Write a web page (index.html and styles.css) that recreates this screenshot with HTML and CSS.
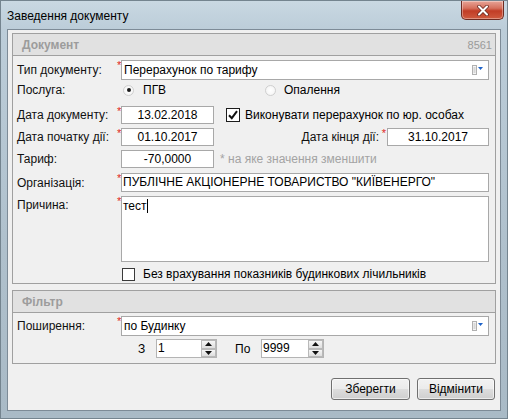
FILE: index.html
```html
<!DOCTYPE html>
<html lang="uk">
<head>
    <meta charset="UTF-8">
    <title>Заведення документу</title>
    <link rel="stylesheet" href="styles.css">
</head>
<body>
    <div class="window">
        <div class="titlebar">
            <span class="title">Заведення документу</span>
            <span class="close-btn">
                <svg width="14" height="11" viewBox="0 0 14 11">
                    <path d="M3 1.5 L11 9.5 M11 1.5 L3 9.5" stroke="#6b2a22" stroke-width="3.6" stroke-linecap="round"/>
                    <path d="M3 1.5 L11 9.5 M11 1.5 L3 9.5" stroke="#fff" stroke-width="2" stroke-linecap="round"/>
                </svg>
            </span>
        </div>

        <div class="client">
            <!-- Документ -->
            <div class="group">
                <div class="group-head">
                    <span>Документ</span>
                    <span class="doc-num">8561</span>
                </div>
                <div class="group-body">
                    <div class="row row-type">
                        <span class="label">Тип документу:</span><span class="req">*</span>
                        <div class="combo">
                            <span>Перерахунок по тарифу</span>
                            <svg class="combo-icon" width="12" height="10" viewBox="0 0 12 10">
                                <rect x="0.5" y="0.5" width="4" height="9" fill="#f4f4f4" stroke="#b0b0b0"/>
                                <path d="M1.5 3 H3.5 M1.5 5 H3.5 M1.5 7 H3.5" stroke="#b8b8b8"/>
                                <path d="M6 2 H11 L8.5 5 Z" fill="#1f63c8"/>
                            </svg>
                        </div>
                    </div>

                    <div class="row row-service">
                        <span class="label">Послуга:</span><span class="req"></span>
                        <span class="option option-first">
                            <span class="radio checked"></span><span class="option-text">ПГВ</span>
                        </span>
                        <span class="option">
                            <span class="radio"></span><span class="option-text">Опалення</span>
                        </span>
                    </div>

                    <div class="row row-date">
                        <span class="label">Дата документу:</span><span class="req">*</span>
                        <span class="input date">13.02.2018</span>
                        <span class="checkbox checked">
                            <svg width="12" height="12" viewBox="0 0 12 12">
                                <path d="M2 6.2 L4.8 9.2 L10 2.2" fill="none" stroke="#111" stroke-width="2"/>
                            </svg>
                        </span>
                        <span class="check-text">Виконувати перерахунок по юр. особах</span>
                    </div>

                    <div class="row row-period">
                        <span class="label">Дата початку дії:</span><span class="req">*</span>
                        <span class="input date">01.10.2017</span>
                        <span class="label-right">Дата кінця дії:</span><span class="req req-right">*</span>
                        <span class="input date-end">31.10.2017</span>
                    </div>

                    <div class="row row-tariff">
                        <span class="label">Тариф:</span><span class="req"></span>
                        <span class="input date">-70,0000</span>
                        <span class="hint">* на яке значення зменшити</span>
                    </div>

                    <div class="row row-org">
                        <span class="label">Організація:</span><span class="req">*</span>
                        <span class="input wide">ПУБЛІЧНЕ АКЦІОНЕРНЕ ТОВАРИСТВО "КИЇВЕНЕРГО"</span>
                    </div>

                    <div class="row row-reason">
                        <span class="label">Причина:</span><span class="req">*</span>
                        <div class="memo">тест<span class="caret"></span></div>
                    </div>

                    <div class="row row-meters">
                        <span class="checkbox plain"></span>
                        <span class="check-text">Без врахування показників будинкових лічильників</span>
                    </div>
                </div>
            </div>

            <!-- Фільтр -->
            <div class="group group-filter">
                <div class="group-head">
                    <span>Фільтр</span>
                </div>
                <div class="group-body">
                    <div class="row row-scope">
                        <span class="label">Поширення:</span><span class="req">*</span>
                        <div class="combo">
                            <span>по Будинку</span>
                            <svg class="combo-icon" width="12" height="10" viewBox="0 0 12 10">
                                <rect x="0.5" y="0.5" width="4" height="9" fill="#f4f4f4" stroke="#b0b0b0"/>
                                <path d="M1.5 3 H3.5 M1.5 5 H3.5 M1.5 7 H3.5" stroke="#b8b8b8"/>
                                <path d="M6 2 H11 L8.5 5 Z" fill="#1f63c8"/>
                            </svg>
                        </div>
                    </div>

                    <div class="row row-range">
                        <span class="range-label">З</span>
                        <span class="spin spin-from">
                            <span class="spin-value">1</span>
                            <span class="spin-btns">
                                <span class="spin-btn"><svg width="7" height="4" viewBox="0 0 7 4"><path d="M0 4 L3.5 0 L7 4 Z" fill="#111"/></svg></span>
                                <span class="spin-btn"><svg width="7" height="4" viewBox="0 0 7 4"><path d="M0 0 L7 0 L3.5 4 Z" fill="#111"/></svg></span>
                            </span>
                        </span>
                        <span class="range-label range-to">По</span>
                        <span class="spin spin-to">
                            <span class="spin-value">9999</span>
                            <span class="spin-btns">
                                <span class="spin-btn"><svg width="7" height="4" viewBox="0 0 7 4"><path d="M0 4 L3.5 0 L7 4 Z" fill="#111"/></svg></span>
                                <span class="spin-btn"><svg width="7" height="4" viewBox="0 0 7 4"><path d="M0 0 L7 0 L3.5 4 Z" fill="#111"/></svg></span>
                            </span>
                        </span>
                    </div>
                </div>
            </div>

            <div class="actions">
                <button class="btn btn-save">Зберегти</button>
                <button class="btn btn-cancel">Відмінити</button>
            </div>
        </div>
    </div>
</body>
</html>
```

FILE: styles.css
```css
* {
    box-sizing: border-box;
}

body {
    margin: 0;
    font-family: "Liberation Sans", Arial, sans-serif;
    font-size: 12px;
    color: #000;
    background: #fff;
}

/* window frame */
.window {
    width: 508px;
    height: 419px;
    display: flex;
    flex-direction: column;
    padding: 0 6px 7px;
    border: 1px solid #74848f;
    background: linear-gradient(to bottom, #c9d8e2 0, #bccdd9 28px, #afc0cc 60%, #a9bac6 100%);
}

.titlebar {
    height: 28px;
    display: flex;
    align-items: flex-start;
    flex-shrink: 0;
}

.title {
    margin-top: 7px;
    line-height: 16px;
    color: #000;
}

.close-btn {
    margin-left: auto;
    margin-right: -3px;
    width: 43px;
    height: 19px;
    display: flex;
    align-items: center;
    justify-content: center;
    border: 1px solid #6e2b22;
    border-top: none;
    border-radius: 0 0 5px 5px;
    background: linear-gradient(to bottom, #e7a497 0, #d5705d 40%, #c13d26 55%, #cf5a3f 100%);
    box-shadow: inset 0 0 0 1px rgba(255, 255, 255, 0.35);
}

.client {
    flex: 1;
    background: #f0f0f0;
    border: 1px solid #7d8b97;
    padding: 3px 4px;
}

/* group boxes */
.group {
    border: 1px solid #a0a0a0;
    background: #f0f0f0;
}

.group-filter {
    margin-top: 6px;
}

.group-head {
    height: 22px;
    display: flex;
    align-items: center;
    justify-content: space-between;
    padding: 0 3px 0 9px;
    background: #e1e1e1;
    border-bottom: 1px solid #a0a0a0;
    font-weight: bold;
    color: #9c9c9c;
}

.doc-num {
    font-weight: normal;
    font-size: 11px;
    color: #9a9a9a;
}

.group-body {
    padding: 0 6px 1px 4px;
}

.row {
    display: flex;
    align-items: center;
}

.label {
    width: 100px;
    flex-shrink: 0;
    color: #111;
}

.req {
    width: 4px;
    flex-shrink: 0;
    align-self: flex-start;
    font-size: 11px;
    line-height: 11px;
    color: #e0281c;
}

.row-type { margin-top: 4px; height: 20px; }
.row-service { height: 20px; }
.row-date { margin-top: 6px; height: 18px; }
.row-period { margin-top: 4px; height: 18px; }
.row-tariff { margin-top: 4px; height: 18px; }
.row-org { margin-top: 5px; height: 19px; }
.row-reason { margin-top: 4px; height: 66px; align-items: flex-start; }
.row-meters { margin-top: 4px; height: 16px; padding-left: 105px; }
.row-scope { margin-top: 3px; height: 20px; }
.row-range { margin-top: 3px; height: 19px; padding-left: 121px; margin-bottom: 4px; }

.row-reason .label {
    line-height: 18px;
}

/* inputs */
.combo {
    flex: 1;
    height: 20px;
    display: flex;
    align-items: center;
    padding: 0 4px 0 2px;
    background: #fff;
    border: 1px solid #a8a8a8;
}

.combo-icon {
    margin-left: auto;
}

.input {
    height: 18px;
    line-height: 16px;
    background: #fff;
    border: 1px solid #a8a8a8;
    white-space: nowrap;
}

.date {
    width: 93px;
    text-align: center;
}

.date-end {
    width: 102px;
    text-align: center;
}

.wide {
    flex: 1;
    height: 19px;
    padding-left: 1px;
}

.memo {
    flex: 1;
    height: 66px;
    padding: 2px 1px;
    background: #fff;
    border: 1px solid #a8a8a8;
    line-height: 14px;
}

.caret {
    display: inline-block;
    width: 1px;
    height: 14px;
    background: #000;
    vertical-align: top;
}

.hint {
    margin-left: 6px;
    color: #a3a3a3;
}

.label-right {
    margin-left: auto;
    color: #111;
}

.req-right {
    width: 8px;
    text-align: right;
    padding-right: 1px;
}

/* radio & checkbox */
.option {
    display: flex;
    align-items: center;
}

.option-first {
    width: 144px;
}

.radio {
    width: 11px;
    height: 11px;
    border-radius: 50%;
    border: 1px solid #cfcfcf;
    background: radial-gradient(circle, #fff 0, #f2f2f2 100%);
    display: flex;
    align-items: center;
    justify-content: center;
}

.option-first .radio {
    margin-left: 2px;
}

.radio.checked::after {
    content: '';
    width: 4px;
    height: 4px;
    border-radius: 50%;
    background: #1a1a1a;
}

.option-text {
    margin-left: 9px;
}

.option:not(.option-first) .option-text {
    margin-left: 8px;
}

.checkbox {
    width: 14px;
    height: 14px;
    flex-shrink: 0;
    margin-left: 12px;
    border: 1px solid #1c1c1c;
    background: #fff;
    display: flex;
    align-items: center;
    justify-content: center;
}

.checkbox.plain {
    width: 13px;
    height: 13px;
    margin-left: 0;
    border-color: #3a3a3a;
}

.check-text {
    margin-left: 5px;
    white-space: nowrap;
}

.row-meters .check-text {
    margin-left: 8px;
}

/* spin edits */
.range-label {
    width: 18px;
}

.range-to {
    width: 26px;
    margin-left: 18px;
}

.spin {
    height: 19px;
    display: flex;
    background: #fff;
    border: 1px solid #b4b4b4;
}

.spin-from {
    width: 61px;
}

.spin-to {
    width: 63px;
}

.spin-value {
    flex: 1;
    padding-left: 1px;
    line-height: 17px;
}

.spin-btns {
    width: 15px;
    display: flex;
    flex-direction: column;
}

.spin-btn {
    flex: 1;
    display: flex;
    align-items: center;
    justify-content: center;
    background: linear-gradient(to bottom, #f6f6f6, #dedede);
    border: 1px solid #b9b9b9;
}

/* buttons */
.actions {
    display: flex;
    justify-content: flex-end;
    gap: 7px;
    margin-top: 14px;
    margin-right: 1px;
}

.btn {
    height: 22px;
    padding: 0;
    font-family: "Liberation Sans", Arial, sans-serif;
    font-size: 12px;
    color: #000;
    border: 1px solid #707070;
    border-radius: 3px;
    background: linear-gradient(to bottom, #f2f2f2 0, #ebebeb 50%, #dddddd 51%, #cfcfcf 100%);
    box-shadow: inset 0 0 0 1px rgba(255, 255, 255, 0.6);
}

.btn-save {
    width: 79px;
}

.btn-cancel {
    width: 78px;
}
```
